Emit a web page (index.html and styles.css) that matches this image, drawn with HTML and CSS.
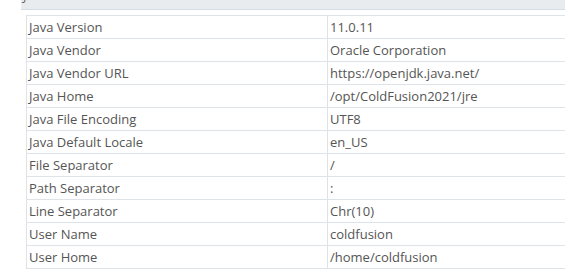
FILE: index.html
```html
<!DOCTYPE html>
<html>
<head>
<meta charset="utf-8">
<link rel="stylesheet" href="styles.css">
</head>
<body>
<div class="panel">
  <div class="panel-head"><span class="panel-title">Java</span></div>
  <table class="info">
    <tr><td class="k">Java Version</td><td class="v">11.0.11</td></tr>
    <tr><td class="k">Java Vendor</td><td class="v">Oracle Corporation</td></tr>
    <tr><td class="k">Java Vendor URL</td><td class="v">https://openjdk.java.net/</td></tr>
    <tr><td class="k">Java Home</td><td class="v">/opt/ColdFusion2021/jre</td></tr>
    <tr><td class="k">Java File Encoding</td><td class="v">UTF8</td></tr>
    <tr><td class="k">Java Default Locale</td><td class="v">en_US</td></tr>
    <tr><td class="k">File Separator</td><td class="v">/</td></tr>
    <tr><td class="k">Path Separator</td><td class="v">:</td></tr>
    <tr><td class="k">Line Separator</td><td class="v">Chr(10)</td></tr>
    <tr><td class="k">User Name</td><td class="v">coldfusion</td></tr>
    <tr><td class="k">User Home</td><td class="v">/home/coldfusion</td></tr>
  </table>
</div>
</body>
</html>
```
FILE: styles.css
```css
html, body {
  margin: 0;
  padding: 0;
  background: #ffffff;
  overflow: hidden;
}
body {
  font-family: "Open Sans", "DejaVu Sans", sans-serif;
  font-size: 13px;
  color: #555555;
}
.panel {
  margin-left: 21px;
  width: 600px;
}
.panel-head {
  height: 9px;
  background: #e9ecee;
  border-bottom: 1px solid #d3dde2;
  overflow: hidden;
  position: relative;
}
.panel-title {
  position: absolute;
  left: 2px;
  top: -13px;
  font-size: 13px;
  line-height: 16px;
  color: #666;
}
.info {
  margin-top: 5px;
  margin-left: 5px;
  border-collapse: collapse;
  width: 620px;
}
.info td {
  border: 1px solid #dde3e6;
  height: 22px;
  padding: 0 0 0 2px;
  line-height: 22px;
  white-space: nowrap;
  vertical-align: middle;
}
.info td.k {
  width: 298px;
}
```
